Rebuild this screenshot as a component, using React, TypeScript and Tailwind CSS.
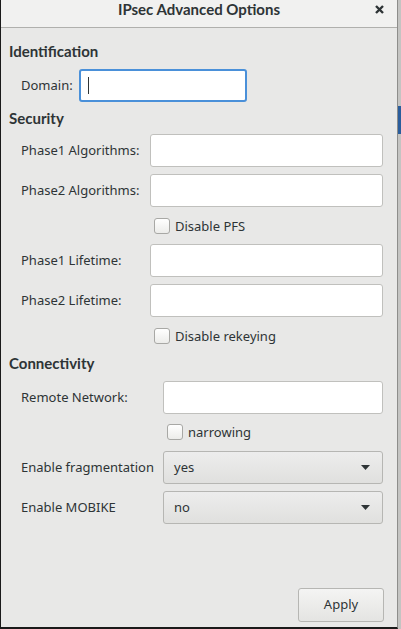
import React from 'react';

const font = "font-['Noto_Sans','DejaVu_Sans',sans-serif]";
const boldFont = "font-['Lato','Noto_Sans',sans-serif]";

const Entry: React.FC<{ w: string; focused?: boolean }> = ({ w, focused }) => (
  <div
    className={`relative h-[33px] ${w} rounded-[3px] bg-white ${
      focused ? 'border-2 border-[#4a90d9]' : 'border border-[#c0c0bd]'
    }`}
  >
    {focused && <span className="absolute left-[7px] top-[6px] h-[17px] w-px bg-[#2e3436]" />}
  </div>
);

const Check: React.FC<{ label: string; indent: string }> = ({ label, indent }) => (
  <div className={`flex h-4 items-center ${indent}`}>
    <span className="h-4 w-4 rounded-[3px] border border-[#a8a8a5] bg-gradient-to-b from-white to-[#ececea]" />
    <span className="ml-[5px] text-[13px] leading-4 text-[#2e3436]">{label}</span>
  </div>
);

const Combo: React.FC<{ value: string }> = ({ value }) => (
  <div className="flex h-[33px] w-[220px] items-center justify-between rounded-[3px] border border-[#b6b6b3] bg-gradient-to-b from-[#ededed] to-[#e0e0de] pl-[10px] pr-[12px]">
    <span className="text-[13px] text-[#2e3436]">{value}</span>
    <svg width="9" height="5" viewBox="0 0 9 5">
      <path d="M0 0h9L4.5 5z" fill="#2e3436" />
    </svg>
  </div>
);

const Row: React.FC<{ label: string; col: string; className?: string; children: React.ReactNode }> = ({
  label,
  col,
  className = '',
  children,
}) => (
  <div className={`ml-[12px] flex items-center ${className}`}>
    <span className={`${col} shrink-0 text-[13px] text-[#2e3436]`}>{label}</span>
    {children}
  </div>
);

const Heading: React.FC<{ text: string; className?: string }> = ({ text, className = '' }) => (
  <div className={`h-5 ${boldFont} text-[15px] font-bold leading-5 text-[#2e3436] ${className}`}>{text}</div>
);

export default function App() {
  return (
    <div className={`flex h-[629px] w-[401px] bg-[#bfbfbd] ${font}`}>
      <div className="flex w-[398px] flex-col border-b-2 border-l border-r border-b-[#1a1a1a] border-l-[#1a1a1a] border-r-[#8d8d8b] bg-[#e8e8e7]">
        {/* header bar */}
        <div className="relative flex h-[28px] shrink-0 justify-center border-b border-[#b0b0ad] bg-[#f1f1f0]">
          <span className={`${boldFont} text-[15px] font-bold leading-[18px] text-[#2e3436]`}>IPsec Advanced Options</span>
          <svg className="absolute right-[13px] top-[5px]" width="9" height="9" viewBox="0 0 9 9">
            <path d="M1 1l7 7M8 1L1 8" stroke="#2e3436" strokeWidth="2.4" />
          </svg>
        </div>

        <div className="flex flex-1 flex-col pl-[8px] pt-[13px]">
          <Heading text="Identification" />
          <Row label="Domain:" col="w-[58px]" className="mt-[8px]">
            <Entry w="w-[168px]" focused />
          </Row>

          <Heading text="Security" className="mt-[6px]" />
          <Row label="Phase1 Algorithms:" col="w-[129px]" className="mt-[6px]">
            <Entry w="w-[233px]" />
          </Row>
          <Row label="Phase2 Algorithms:" col="w-[129px]" className="mt-[7px]">
            <Entry w="w-[233px]" />
          </Row>
          <Check label="Disable PFS" indent="ml-[145px] mt-[11px]" />
          <Row label="Phase1 Lifetime:" col="w-[129px]" className="mt-[10px]">
            <Entry w="w-[233px]" />
          </Row>
          <Row label="Phase2 Lifetime:" col="w-[129px]" className="mt-[7px]">
            <Entry w="w-[233px]" />
          </Row>
          <Check label="Disable rekeying" indent="ml-[145px] mt-[11px]" />

          <Heading text="Connectivity" className="mt-[9px]" />
          <Row label="Remote Network:" col="w-[142px]" className="mt-[8px]">
            <Entry w="w-[220px]" />
          </Row>
          <Check label="narrowing" indent="ml-[158px] mt-[10px]" />
          <Row label="Enable fragmentation" col="w-[142px]" className="mt-[11px]">
            <Combo value="yes" />
          </Row>
          <Row label="Enable MOBIKE" col="w-[142px]" className="mt-[7px]">
            <Combo value="no" />
          </Row>

          <div className="flex-1" />
          <div className="mb-[5px] mr-[13px] flex justify-end">
            <button
              type="button"
              className="h-[34px] w-[86px] rounded-[3px] border border-[#b6b6b3] bg-gradient-to-b from-[#f4f4f3] to-[#e4e4e2] text-[13px] text-[#2e3436]"
            >
              Apply
            </button>
          </div>
        </div>
      </div>
      <div className="flex w-[3px] flex-col">
        <div className="h-[106px] bg-[#c4c4c2]" />
        <div className="h-[28px] bg-[#2a5d9c]" />
        <div className="flex-1 bg-[#c4c4c2]" />
      </div>
    </div>
  );
}
